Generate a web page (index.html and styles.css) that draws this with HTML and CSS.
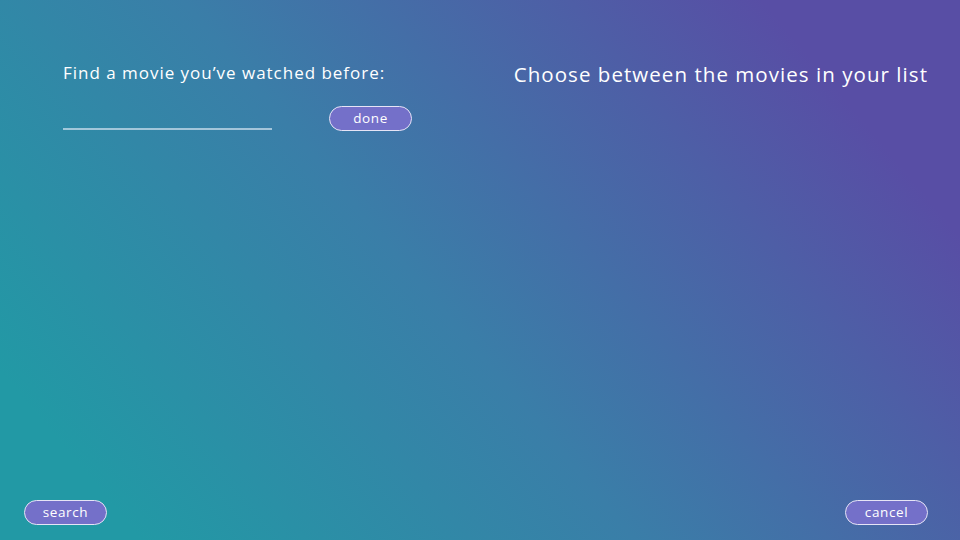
FILE: index.html
```html
<!DOCTYPE html>
<html lang="en">
<head>
<meta charset="utf-8">
<title>Movie picker</title>
<link rel="stylesheet" href="styles.css">
</head>
<body>
<div class="screen">
  <main class="top">
    <section class="finder">
      <label class="finder-label" for="movie">Find a movie you’ve watched before:</label>
      <div class="finder-row">
        <input id="movie" class="finder-input" type="text">
        <button class="pill">done</button>
      </div>
    </section>
    <h1 class="choose">Choose between the movies in your list</h1>
  </main>
  <footer class="bottom">
    <button class="pill">search</button>
    <button class="pill">cancel</button>
  </footer>
</div>
</body>
</html>
```
FILE: styles.css
```css
* { box-sizing: border-box; }
html, body { margin: 0; padding: 0; }
body {
  width: 960px;
  height: 540px;
  overflow: hidden;
  font-family: "Open Sans", "Liberation Sans", sans-serif;
  color: #fff;
}
.screen {
  width: 960px;
  height: 540px;
  display: flex;
  flex-direction: column;
  justify-content: space-between;
  background: linear-gradient(50deg, #2299a5 10%, #3a7ea8 45%, #584ea5 86%);
}
.top {
  display: flex;
  justify-content: space-between;
  padding: 62px 32px 0 63px;
}
.finder {
  display: flex;
  flex-direction: column;
}
.finder-label {
  font-size: 17px;
  font-weight: 500;
  line-height: 22px;
  letter-spacing: 0.98px;
}
.finder-row {
  display: flex;
  align-items: flex-end;
  gap: 57px;
  margin-top: 22px;
}
.finder-input {
  width: 209px;
  height: 24px;
  background: transparent;
  border: none;
  border-bottom: 2px solid rgba(200, 220, 235, 0.75);
  outline: none;
  color: #fff;
  margin-bottom: 1px;
}
.pill {
  width: 83px;
  height: 25px;
  border-radius: 13px;
  border: 1px solid #e6e4f6;
  background: #7470c9;
  color: #fff;
  font-family: "Open Sans", "Liberation Sans", sans-serif;
  font-size: 13.5px;
  font-weight: 500;
  letter-spacing: 0.6px;
  padding: 0 0 1px;
  line-height: 21px;
}
.choose {
  margin: -1px 0 0;
  font-size: 20.5px;
  font-weight: 500;
  line-height: 26px;
  letter-spacing: 1.05px;
}
.bottom {
  display: flex;
  justify-content: space-between;
  padding: 0 32px 15px 24px;
}
```
